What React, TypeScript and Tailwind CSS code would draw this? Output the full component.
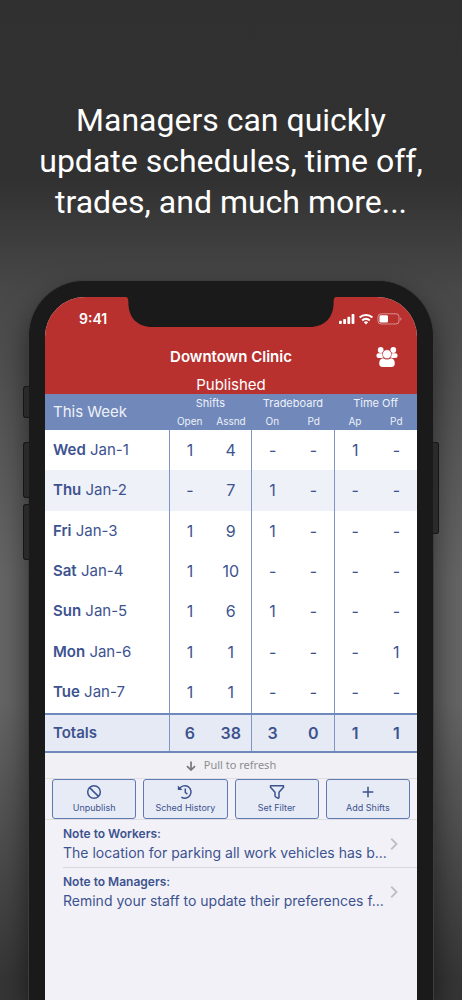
import React from "react";

type Day = { day: string; date: string; cells: string[] };

const days: Day[] = [
  { day: "Wed", date: "Jan-1", cells: ["1", "4", "-", "-", "1", "-"] },
  { day: "Thu", date: "Jan-2", cells: ["-", "7", "1", "-", "-", "-"] },
  { day: "Fri", date: "Jan-3", cells: ["1", "9", "1", "-", "-", "-"] },
  { day: "Sat", date: "Jan-4", cells: ["1", "10", "-", "-", "-", "-"] },
  { day: "Sun", date: "Jan-5", cells: ["1", "6", "1", "-", "-", "-"] },
  { day: "Mon", date: "Jan-6", cells: ["1", "1", "-", "-", "-", "1"] },
  { day: "Tue", date: "Jan-7", cells: ["1", "1", "-", "-", "-", "-"] },
];

const totals = ["6", "38", "3", "0", "1", "1"];
const groups = ["Shifts", "Tradeboard", "Time Off"];
const columns = ["Open", "Assnd", "On", "Pd", "Ap", "Pd"];

const divider = (i: number) => (i % 2 === 0 ? "border-l border-[#7f95c6] p-0" : "p-0");

function Notch() {
  return (
    <svg
      className="absolute -top-px left-1/2 -translate-x-1/2"
      width="210"
      height="32"
      viewBox="-1 -1 210 32"
      aria-hidden="true"
    >
      <path
        d="M-1 -1 V0 C1 0.4 1.4 2.5 1.4 6 C1.4 21 11 30 25 30 H183 C197 30 206.6 21 206.6 6 C206.6 2.5 207 0.4 209 0 V-1 Z"
        fill="#1a1a1a"
      />
    </svg>
  );
}

function StatusIcons() {
  return (
    <svg width="64" height="14" viewBox="0 0 64 14" fill="#fff" aria-hidden="true">
      <rect x="0" y="8.7" width="2.8" height="3.3" rx="0.8" />
      <rect x="4.2" y="7" width="2.8" height="5" rx="0.8" />
      <rect x="8.4" y="4.7" width="2.8" height="7.3" rx="0.8" />
      <rect x="12.6" y="2" width="2.8" height="10" rx="0.8" />
      <g fill="none" stroke="#fff" strokeWidth="2.1">
        <path d="M20.6 5.6 A9 9 0 0 1 33.4 5.6" />
        <path d="M23.2 8.4 A5.4 5.4 0 0 1 30.8 8.4" />
      </g>
      <path d="M27 12.6 L24.8 10.3 A3.2 3.2 0 0 1 29.2 10.3 Z" />
      <rect x="39" y="1.8" width="21" height="10.2" rx="3" fill="none" stroke="#fff" strokeOpacity="0.45" />
      <rect x="40.5" y="3.2" width="8.5" height="7.4" rx="1.4" />
      <path d="M61.4 5.2 C62.8 5.8 62.8 8.2 61.4 8.8 Z" fillOpacity="0.5" />
    </svg>
  );
}

function PeopleIcon() {
  return (
    <svg width="22" height="20" viewBox="0 0 22 20" fill="#fff" aria-hidden="true">
      <circle cx="4.7" cy="3" r="2.9" />
      <circle cx="17.3" cy="3" r="2.9" />
      <rect x="0.4" y="6.2" width="7.4" height="4.8" rx="2.2" />
      <rect x="14.2" y="6.2" width="7.4" height="4.8" rx="2.2" />
      <circle cx="11" cy="7.2" r="4.5" stroke="#b8312f" strokeWidth="0.6" />
      <path d="M3.2 16.2 C3.2 13 4.6 11.4 7 11.2 C9.6 12.9 12.4 12.9 15 11.2 C17.4 11.4 18.8 13 18.8 16.2 C18.8 18.8 17.6 20 15.6 20 H6.4 C4.4 20 3.2 18.8 3.2 16.2 Z" />
    </svg>
  );
}

const stroke = {
  width: 16,
  height: 16,
  viewBox: "0 0 16 16",
  fill: "none",
  stroke: "currentColor",
  strokeWidth: 1.5,
  "aria-hidden": true,
} as const;

const actions = [
  {
    label: "Unpublish",
    icon: (
      <svg {...stroke}>
        <circle cx="8" cy="8" r="6.3" />
        <path d="M3.6 3.6 L12.4 12.4" />
      </svg>
    ),
  },
  {
    label: "Sched History",
    icon: (
      <svg {...stroke}>
        <path d="M2.6 4.6 A6.2 6.2 0 1 1 4.4 13.1" />
        <path d="M0.8 1.4 V6 H5.6 Z" fill="currentColor" stroke="none" />
        <path d="M8.3 4.6 V8.5 L10.4 10.2" />
      </svg>
    ),
  },
  {
    label: "Set Filter",
    icon: (
      <svg {...stroke} strokeLinejoin="round">
        <path d="M1.5 1.7 H14.5 V3.2 L10 8.3 V13.4 C10 14.2 9.4 14.4 8.9 14.1 L6.6 12.8 C6.2 12.5 6 12.3 6 11.8 V8.3 L1.5 3.2 Z" />
      </svg>
    ),
  },
  {
    label: "Add Shifts",
    icon: (
      <svg {...stroke}>
        <path d="M8 2.7 V13.3 M2.7 8 H13.3" />
      </svg>
    ),
  },
];

const notes = [
  { title: "Note to Workers:", text: "The location for parking all work vehicles has b..." },
  { title: "Note to Managers:", text: "Remind your staff to update their preferences f..." },
];

export default function App() {
  return (
    <div className="flex min-h-screen flex-col bg-[linear-gradient(to_bottom,#303030_0%,#313131_18%,#484848_29%,#666666_58%,#666666_70%,#363636_98%)] px-7 font-['Inter',sans-serif]">
      <h1 className="-mx-4 mb-[57px] mt-[100px] text-center font-['Roboto',sans-serif] text-[32px] font-normal leading-[41px] text-white">
        Managers can quickly
        <br />
        update schedules, time off,
        <br />
        trades, and much more...
      </h1>

      <div className="relative flex flex-1 flex-col rounded-t-[56px] border-l border-r border-t border-[#3c3c3c] bg-[#1a1a1a] px-4 pt-4 shadow-[0_16px_32px_rgba(0,0,0,0.55)]">
        <span className="absolute -left-[6px] top-[105px] h-8 w-[6px] rounded-l-[3px] border border-r-0 border-[#161616] bg-[#2a2a2a]" />
        <span className="absolute -left-[6px] top-[161px] h-[56px] w-[6px] rounded-l-[3px] border border-r-0 border-[#161616] bg-[#2a2a2a]" />
        <span className="absolute -left-[6px] top-[223px] h-[56px] w-[6px] rounded-l-[3px] border border-r-0 border-[#161616] bg-[#2a2a2a]" />
        <span className="absolute -right-[6px] top-[161px] h-[92px] w-[6px] rounded-r-[3px] border border-l-0 border-[#161616] bg-[#2a2a2a]" />

        <main className="relative flex flex-1 flex-col overflow-hidden rounded-t-[40px] bg-[#f2f1f7] text-[#3d538f]">
          <header className="bg-[#b8312f] text-white">
            <div className="flex h-11 items-center justify-between pl-[34px] pr-[14px]">
              <span className="text-sm font-semibold">9:41</span>
              <StatusIcons />
            </div>
            <div className="grid h-8 grid-cols-[1fr_auto_1fr] items-center px-[19px]">
              <h2 className="col-start-2 text-[15px] font-semibold">Downtown Clinic</h2>
              <button type="button" aria-label="Team" className="justify-self-end">
                <PeopleIcon />
              </button>
            </div>
            <p className="flex h-[21px] items-end justify-center text-[15px] leading-[18px]">Published</p>
          </header>
          <Notch />

          <table className="h-[359px] w-full table-fixed border-collapse text-center text-base">
            <colgroup>
              <col className="w-1/3" />
              {columns.map((_, i) => (
                <col key={i} />
              ))}
            </colgroup>
            <thead className="bg-[#7088ba] text-[11px] leading-[18px] text-[#eef1f9]">
              <tr className="h-[18px]">
                <th rowSpan={2} scope="col" className="p-0 pl-2 text-left text-[15px] font-normal">
                  This Week
                </th>
                {groups.map((g) => (
                  <th key={g} colSpan={2} scope="colgroup" className="p-0 font-normal">
                    {g}
                  </th>
                ))}
              </tr>
              <tr className="h-[18px]">
                {columns.map((c, i) => (
                  <th key={i} scope="col" className="p-0 text-[10px] font-normal">
                    {c}
                  </th>
                ))}
              </tr>
            </thead>
            <tbody className="bg-white">
              {days.map((d) => (
                <tr key={d.day} className={d.day === "Thu" ? "bg-[#eff1f9]" : ""}>
                  <th scope="row" className="p-0 pl-2 text-left text-[15px] font-normal">
                    <b className="font-semibold">{d.day}</b> {d.date}
                  </th>
                  {d.cells.map((c, i) => (
                    <td key={i} className={divider(i)}>
                      {c}
                    </td>
                  ))}
                </tr>
              ))}
            </tbody>
            <tfoot className="border-y-2 border-[#6f89bd] bg-[#e6eaf4]">
              <tr className="h-[38px] font-semibold">
                <th scope="row" className="p-0 pl-2 text-left text-[15px] font-semibold">
                  Totals
                </th>
                {totals.map((t, i) => (
                  <td key={i} className={divider(i)}>
                    {t}
                  </td>
                ))}
              </tr>
            </tfoot>
          </table>

          <div className="flex h-[26px] items-center justify-center gap-2 border-b border-[#dfdee2] bg-[#f1f0f4] font-['Noto_Sans',sans-serif] text-[11px] text-[#8e8e90]">
            <svg width="10" height="10" viewBox="0 0 10 10" fill="none" stroke="#77777a" strokeWidth="1.7" aria-hidden="true">
              <path d="M5 0.5 V9 M1 5.2 L5 9 L9 5.2" />
            </svg>
            Pull to refresh
          </div>

          <div className="grid grid-cols-4 gap-[7px] border-b border-[#dfdee2] px-[7px]">
            {actions.map((a) => (
              <button
                key={a.label}
                type="button"
                className="flex h-10 flex-col items-center justify-center gap-[2px] rounded-[3px] border border-[#5f7ab3] bg-[#e7ebf5] text-[9px] leading-[12px]"
              >
                {a.icon}
                <span className="whitespace-nowrap">{a.label}</span>
              </button>
            ))}
          </div>

          <ul className="pl-[18px]">
            {notes.map((n, i) => (
              <li key={n.title} className={i === 0 ? "border-b border-[#d8d7dd]" : ""}>
                <a href="#note" className="flex h-[47px] items-center justify-between pr-[19px]">
                  <span>
                    <b className="block text-xs font-semibold leading-[18px]">{n.title}</b>
                    <span className="block whitespace-nowrap text-sm leading-[19px]">{n.text}</span>
                  </span>
                  <svg className="shrink-0" width="8" height="14" viewBox="0 0 8 14" fill="none" stroke="#bcbcc2" strokeWidth="1.8" aria-hidden="true">
                    <path d="M1.2 1.7 L6.5 7 L1.2 12.3" />
                  </svg>
                </a>
              </li>
            ))}
          </ul>
        </main>
      </div>
    </div>
  );
}
